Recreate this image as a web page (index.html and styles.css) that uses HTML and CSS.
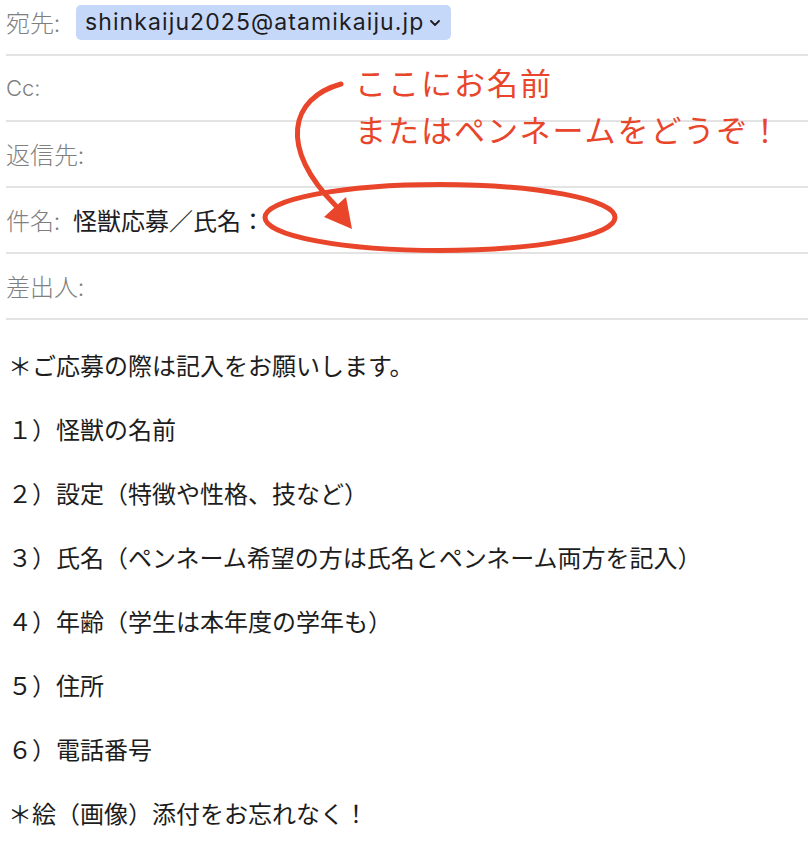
FILE: index.html
```html
<!DOCTYPE html>
<html lang="ja">
<head>
    <meta charset="UTF-8">
    <title>怪獣応募</title>
    <link rel="stylesheet" href="styles.css">
</head>
<body>

<div class="page">
    <div class="headers">
        <div class="row row-first">
            <span class="label">宛先:</span>
            <span class="address">shinkaiju2025@atamikaiju.jp
                <svg class="chevron" width="10" height="6" viewBox="0 0 10 6"><path d="M1 1 L5 5 L9 1" fill="none" stroke="#1d1d1f" stroke-width="1.8" stroke-linecap="round" stroke-linejoin="round"/></svg>
            </span>
        </div>
        <div class="row">
            <span class="label label-latin">Cc:</span>
        </div>
        <div class="row">
            <span class="label">返信先:</span>
        </div>
        <div class="row">
            <span class="label">件名:</span>
            <span class="subject">怪獣応募／氏名：</span>
        </div>
        <div class="row">
            <span class="label">差出人:</span>
        </div>
    </div>

    <div class="message">
        <p>＊ご応募の際は記入をお願いします。</p>
        <p>１）怪獣の名前</p>
        <p>２）設定（特徴や性格、技など）</p>
        <p>３）氏名（ペンネーム希望の方は氏名とペンネーム両方を記入）</p>
        <p>４）年齢（学生は本年度の学年も）</p>
        <p>５）住所</p>
        <p>６）電話番号</p>
        <p>＊絵（画像）添付をお忘れなく！</p>
    </div>

    <!-- 手書きの注釈 -->
    <svg class="marks" width="808" height="320" viewBox="0 0 808 320">
        <path d="M341 84 C 290 98, 278 148, 336 206" fill="none" stroke="#e9452b" stroke-width="5" stroke-linecap="round"/>
        <polygon points="324,217 346,197 352,229" fill="#e9452b"/>
        <ellipse cx="440" cy="217.5" rx="175" ry="33" fill="none" stroke="#e9452b" stroke-width="5"/>
    </svg>
    <div class="note">
        <div>ここにお名前</div>
        <div>またはペンネームをどうぞ！</div>
    </div>
</div>

</body>
</html>
```

FILE: styles.css
```css
* {
    margin: 0;
    padding: 0;
    box-sizing: border-box;
}

body {
    font-family: Inter, "Noto Sans CJK JP", sans-serif;
    background-color: #fff;
    color: #1d1d1f;
    width: 808px;
    height: 852px;
    overflow: hidden;
}

.page {
    position: relative;
}

.headers {
    padding-left: 6px;
}

.row {
    display: flex;
    align-items: center;
    gap: 13px;
    height: 66px;
    border-bottom: 2px solid #e3e3e3;
}

.row-first {
    height: 56px;
    padding-bottom: 10px;
}

.label {
    font-family: "Noto Sans CJK JP", sans-serif;
    font-size: 24px;
    font-weight: 300;
    color: #7f7f7f;
    line-height: 1;
}

.label-latin {
    font-family: Inter, sans-serif;
    font-size: 22px;
}

.address {
    display: flex;
    align-items: center;
    gap: 6px;
    height: 35px;
    margin-left: 3px;
    padding: 0 11px 0 9px;
    background-color: #c6d8f9;
    border-radius: 5px;
    font-size: 23px;
    letter-spacing: 1.1px;
    line-height: 1;
}

.chevron {
    margin-top: 2px;
}

.subject {
    font-family: "Noto Sans CJK JP", sans-serif;
    font-size: 24px;
    font-weight: 400;
    color: #1d1d1f;
    line-height: 1;
}

.message {
    padding: 13px 0 0 8px;
    font-family: "Noto Sans CJK JP", sans-serif;
    font-size: 24px;
    color: #1d1d1d;
}

.message p {
    height: 64px;
    line-height: 64px;
}

.marks {
    position: absolute;
    top: 0;
    left: 0;
}

.note {
    position: absolute;
    top: 58px;
    left: 355px;
    font-family: "Noto Sans CJK JP", sans-serif;
    font-size: 31px;
    font-weight: 400;
    letter-spacing: 2px;
    line-height: 47px;
    color: #e9452b;
}
```
